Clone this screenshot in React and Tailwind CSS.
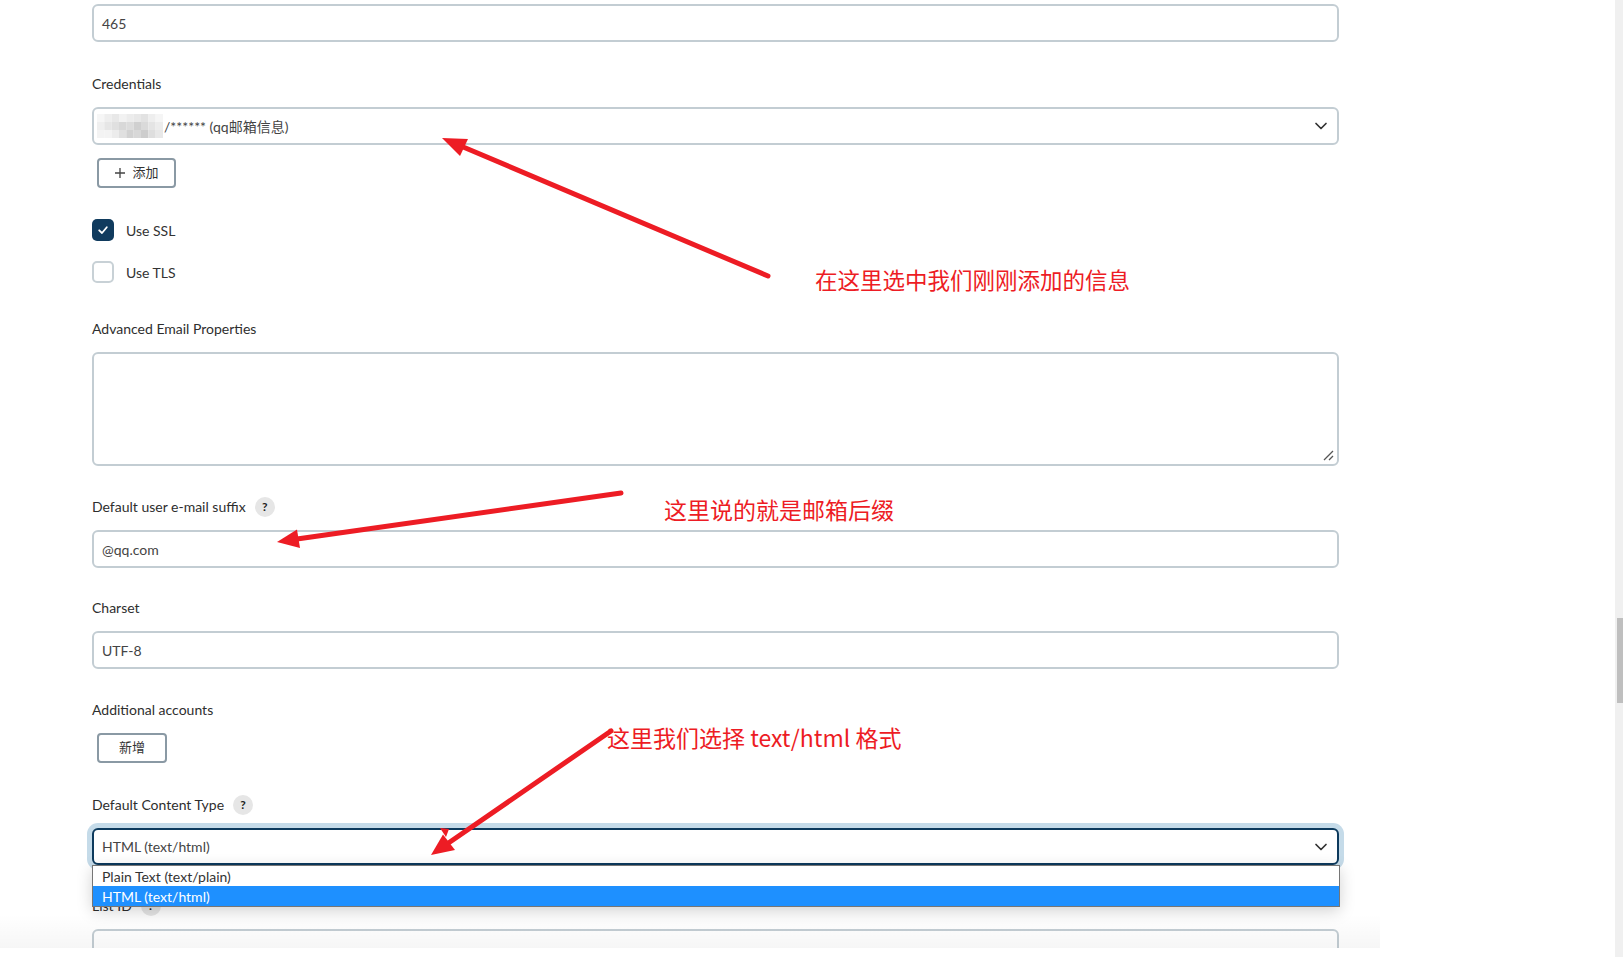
import React from "react";

function Label({ children, help }) {
  return (
    <div className="flex h-[20px] items-center gap-[9px] leading-[20px] text-[#2e2e2e]">
      <span>{children}</span>
      {help && (
        <span className="flex h-[20px] w-[20px] items-center justify-center rounded-full bg-[#e6e6e6] text-[12px] font-bold leading-none text-[#222]">
          ?
        </span>
      )}
    </div>
  );
}

function TextInput({ value, className = "" }) {
  return (
    <div
      className={
        "flex h-[38px] items-center rounded-[6px] border-2 border-[#c3cdd3] bg-white px-[8px] text-[#444] " +
        className
      }
    >
      {value}
    </div>
  );
}

function Chevron() {
  return (
    <svg width="14" height="14" viewBox="0 0 14 14" className="shrink-0">
      <polyline
        points="2,4.5 7,9.5 12,4.5"
        fill="none"
        stroke="#333"
        strokeWidth="1.7"
        strokeLinecap="round"
        strokeLinejoin="round"
      />
    </svg>
  );
}

function Mosaic() {
  const cols = [
    ["#f6f6f6", "#efefef", "#f3f3f3"],
    ["#eeeeee", "#e6e6e6", "#f3f3f3"],
    ["#e8e8e8", "#e0e0e0", "#ececec"],
    ["#f2f2f2", "#d8d8d8", "#e0e0e0"],
    ["#ececec", "#dcdcdc", "#d2d2d2"],
    ["#e8e8e8", "#d0d0d0", "#d8d8d8"],
    ["#e2e2e2", "#dadada", "#cdcdcd"],
    ["#eeeeee", "#e4e4e4", "#dedede"],
    ["#f5f5f5", "#ececec", "#e8e8e8"],
  ];
  return (
    <svg width="66" height="26" viewBox="0 0 72 26" preserveAspectRatio="none" className="shrink-0">
      <defs>
        <filter id="mb" x="-10%" y="-10%" width="120%" height="120%">
          <feGaussianBlur stdDeviation="0.7" />
        </filter>
      </defs>
      <g filter="url(#mb)">
        {cols.map((c, i) =>
          c.map((col, j) => (
            <rect key={i + "-" + j} x={i * 8} y={j * 8 + 1} width="8" height="8" fill={col} />
          ))
        )}
      </g>
    </svg>
  );
}

function Checkbox({ checked }) {
  return checked ? (
    <span className="flex h-[22px] w-[22px] items-center justify-center rounded-[5px] bg-[#103b5e]">
      <svg width="12" height="12" viewBox="0 0 12 12">
        <polyline
          points="2.2,6.3 5,9 9.8,3.2"
          fill="none"
          stroke="#fff"
          strokeWidth="1.8"
          strokeLinecap="round"
          strokeLinejoin="round"
        />
      </svg>
    </span>
  ) : (
    <span className="h-[22px] w-[22px] rounded-[5px] border-2 border-[#c8d1d6] bg-white" />
  );
}

export default function App() {
  return (
    <div className="relative flex h-[957px] w-[1623px] overflow-hidden bg-white font-[Lato,'Noto_Sans_CJK_SC',sans-serif] text-[14px] text-[#333]">
      {/* main scroll area */}
      <div className="flex h-[957px] w-[1615px] flex-col">
        <div className="relative h-[948px] overflow-hidden pl-[92px]">
          <div className="flex w-[1247px] flex-col pt-[4px]">
            <TextInput value="465" />

            <div className="mt-[32px]">
              <Label>Credentials</Label>
            </div>
            <div className="mt-[13px] flex h-[38px] items-center rounded-[6px] border-2 border-[#c3cdd3] bg-white pl-[3px] pr-[9px] text-[#444]">
              <Mosaic />
              <span className="ml-[1px]">/****** (qq邮箱信息)</span>
              <span className="flex-1" />
              <Chevron />
            </div>

            <div className="mt-[13px] flex pl-[5px]">
              <button className="flex h-[30px] w-[79px] items-center justify-center gap-[6px] rounded-[4px] border-2 border-[#8a99a4] bg-white text-[13px] text-[#333]">
                <svg width="12" height="12" viewBox="0 0 12 12">
                  <path d="M6 1v10M1 6h10" stroke="#444" strokeWidth="1.3" />
                </svg>
                <span>添加</span>
              </button>
            </div>

            <div className="mt-[31px] flex h-[22px] items-center gap-[12px]">
              <Checkbox checked />
              <span>Use SSL</span>
            </div>
            <div className="mt-[20px] flex h-[22px] items-center gap-[12px]">
              <Checkbox />
              <span>Use TLS</span>
            </div>

            <div className="mt-[36px]">
              <Label>Advanced Email Properties</Label>
            </div>
            <div className="relative mt-[13px] h-[114px] rounded-[6px] border-2 border-[#c3cdd3] bg-white">
              <svg
                width="12"
                height="12"
                viewBox="0 0 12 12"
                className="absolute bottom-[3px] right-[3px]"
              >
                <path d="M11 2L2 11M11 7L7 11" stroke="#555" strokeWidth="1.3" />
              </svg>
            </div>

            <div className="mt-[31px]">
              <Label help>Default user e-mail suffix</Label>
            </div>
            <TextInput value="@qq.com" className="mt-[13px]" />

            <div className="mt-[30px]">
              <Label>Charset</Label>
            </div>
            <TextInput value="UTF-8" className="mt-[13px]" />

            <div className="mt-[31px]">
              <Label>Additional accounts</Label>
            </div>
            <div className="mt-[13px] flex pl-[5px]">
              <button className="flex h-[30px] w-[70px] items-center justify-center rounded-[4px] border-2 border-[#8a99a4] bg-white text-[13px] text-[#333]">
                新增
              </button>
            </div>

            <div className="mt-[32px]">
              <Label help>Default Content Type</Label>
            </div>
            <div className="relative z-10 mt-[13px]">
              <div className="flex h-[37px] items-center rounded-[6px] border-2 border-[#0d3a5d] bg-white pl-[8px] pr-[9px] text-[#444] ring-[5px] ring-[#c5dbe9]">
                <span>HTML (text/html)</span>
                <span className="flex-1" />
                <Chevron />
              </div>
              <div className="absolute left-0 top-full w-[1248px] border border-[#767676] bg-white shadow-[0_4px_16px_rgba(0,0,0,0.18)]">
                <div className="flex h-[20px] items-center pl-[9px] text-[#333]">Plain Text (text/plain)</div>
                <div className="flex h-[20px] items-center bg-[#1e90ff] pl-[9px] text-white">HTML (text/html)</div>
              </div>
            </div>

            <div className="mt-[31px]">
              <Label help>List ID</Label>
            </div>
            <div className="mt-[13px] h-[38px] rounded-[6px] border-2 border-[#c3cdd3] bg-white" />
          </div>
          <div className="absolute bottom-0 left-0 h-[34px] w-[1380px] bg-gradient-to-b from-transparent to-[rgba(0,0,0,0.035)]" />
        </div>
        <div className="flex-1 bg-white" />
      </div>

      {/* scrollbar */}
      <div className="h-[957px] w-[8px] bg-[#f0f0f0] pl-[2px] pt-[618px]">
        <div className="h-[85px] w-[6px] bg-[#bfbfbf]" />
      </div>

      {/* annotations */}
      <svg
        className="pointer-events-none absolute left-0 top-0 z-20"
        width="1623"
        height="957"
        viewBox="0 0 1623 957"
      >
        <g stroke="#ed1c24" strokeWidth="5" strokeLinecap="round" fill="none">
          <line x1="768" y1="276" x2="462" y2="146.5" />
          <line x1="621" y1="493" x2="297" y2="539" />
          <line x1="611" y1="731" x2="447" y2="844" />
        </g>
        <g fill="#ed1c24">
          <polygon points="442,138 468,139 460,156" />
          <polygon points="277,542 297,529.5 300,548" />
          <polygon points="431,855 443,834.5 455,850" />
          <polygon points="440,828 449,829 446,837" />
        </g>
      </svg>
      <div className="pointer-events-none absolute left-[815px] top-[266px] z-20 whitespace-nowrap font-['Noto_Sans_CJK_SC',sans-serif] text-[22.5px] leading-[26px] text-[#ed1c24]">
        在这里选中我们刚刚添加的信息
      </div>
      <div className="pointer-events-none absolute left-[664px] top-[496px] z-20 whitespace-nowrap font-['Noto_Sans_CJK_SC',sans-serif] text-[23px] leading-[26px] text-[#ed1c24]">
        这里说的就是邮箱后缀
      </div>
      <div className="pointer-events-none absolute left-[607px] top-[724px] z-20 whitespace-nowrap font-['Noto_Sans_CJK_SC',sans-serif] text-[23px] leading-[26px] text-[#ed1c24]">
        这里我们选择 text/html 格式
      </div>
    </div>
  );
}
